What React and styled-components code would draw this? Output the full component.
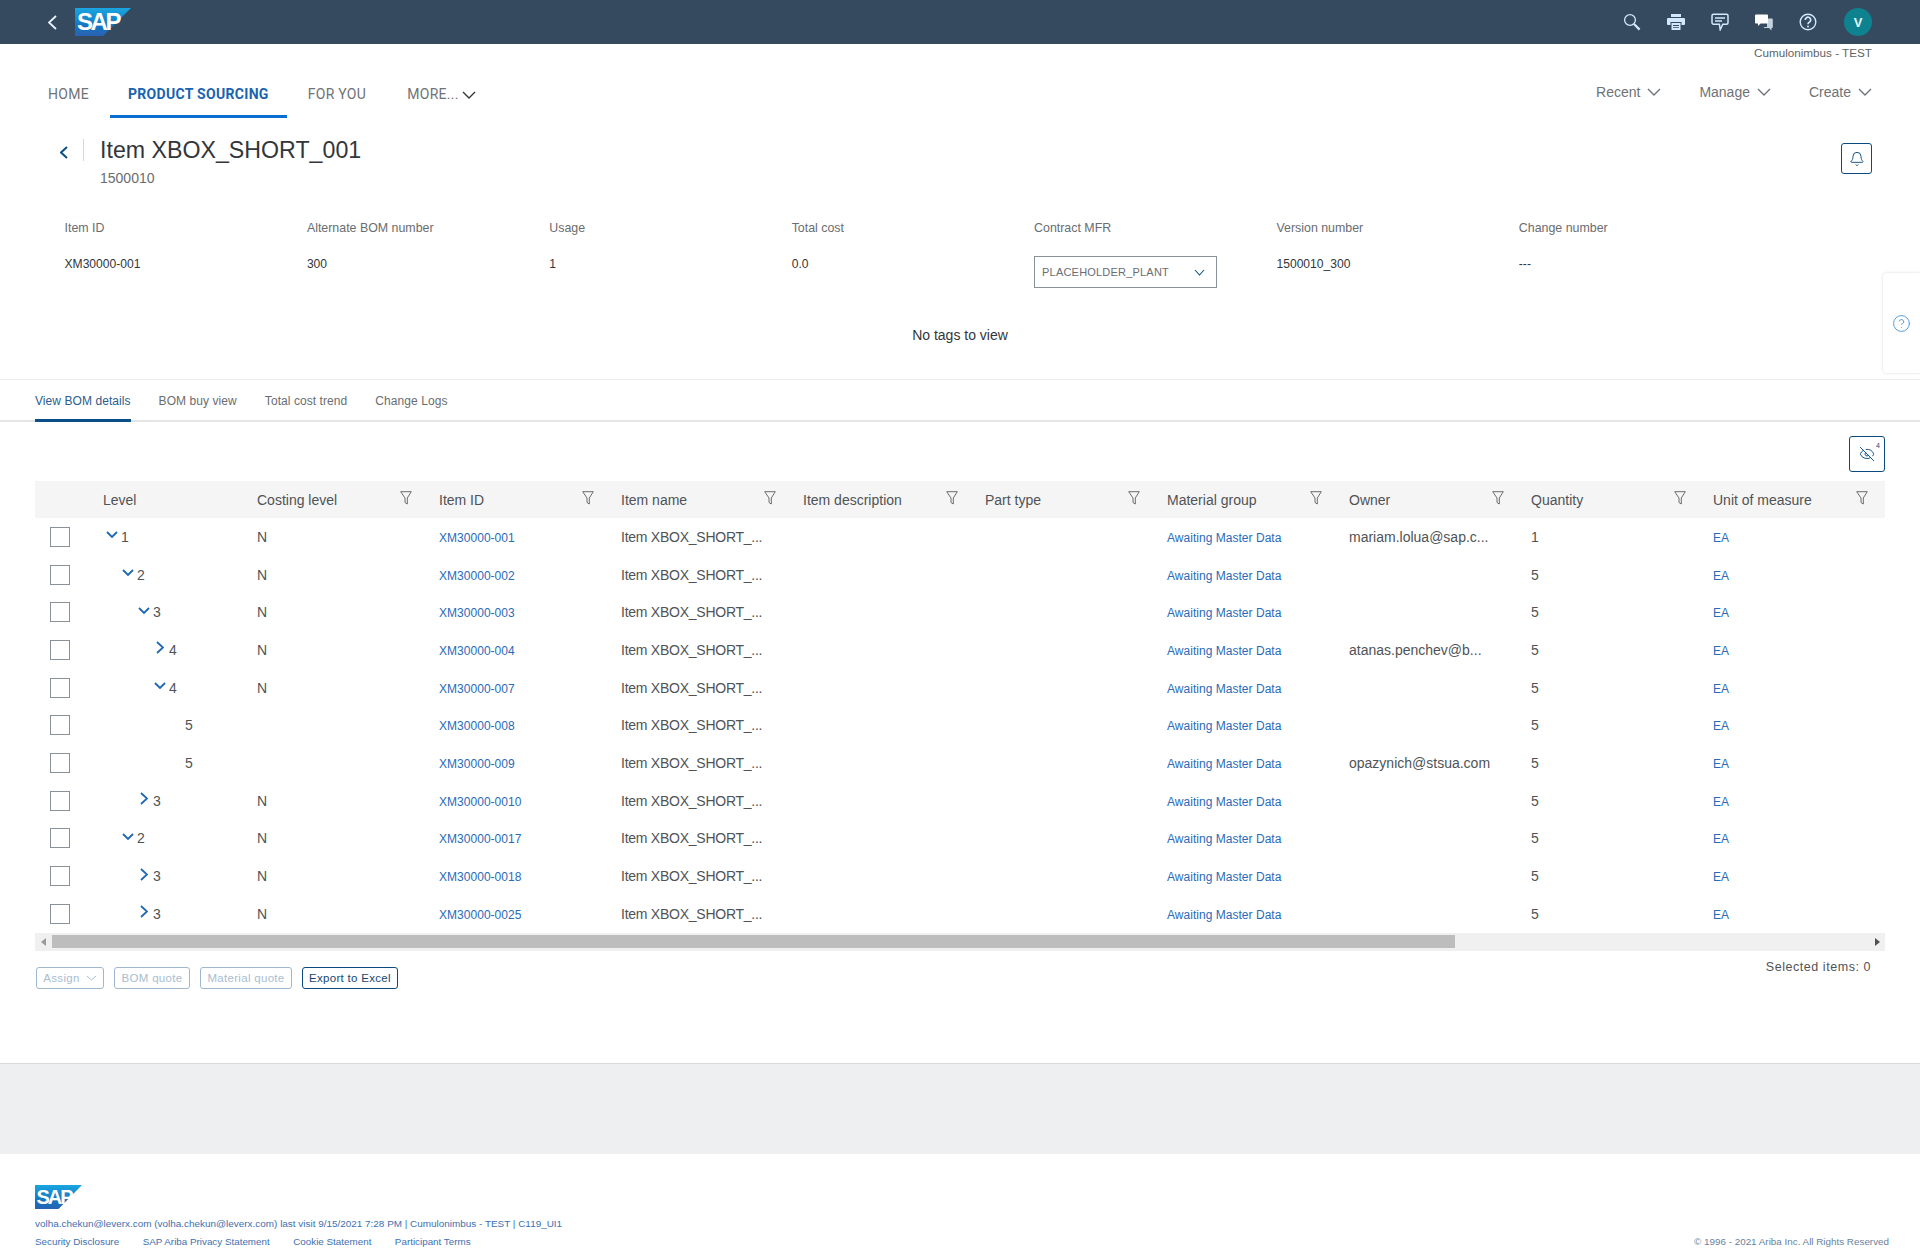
import React from "react";
import styled, { createGlobalStyle } from "styled-components";
import { Bell, EyeOff, HelpCircle } from "lucide-react";

const Global = createGlobalStyle`
  html, body { margin: 0; padding: 0; background: #fff; }
  body { font-family: "Liberation Sans", Arial, sans-serif; color: #32363a; }
  * { box-sizing: border-box; }
`;

const Page = styled.div`width: 1920px; height: 1252px; overflow: hidden; position: relative;`;

const TopBar = styled.header`
  height: 44px; background: #354a5f; display: flex; align-items: center;
  padding: 0 48px; justify-content: space-between;
`;
const TopLeft = styled.div`display: flex; align-items: center; gap: 18px;`;
const TopRight = styled.div`display: flex; align-items: center;`;
const TopIcon = styled.span`display: flex; width: 44px; justify-content: center; color: #d1e8ff;`;
const Avatar = styled.span`
  width: 28px; height: 28px; border-radius: 50%; background: #0f828f; color: #e6f6f8;
  font-size: 13px; font-weight: 700; display: flex; align-items: center; justify-content: center;
  margin-left: 14px;
`;

const LogoBox = styled.span`position: relative; display: block; width: ${p => p.$w}px; height: ${p => p.$h}px;`;
const LogoText = styled.span`
  position: absolute; left: ${p => p.$l}px; top: ${p => p.$t}px; color: #fff; font-weight: 700;
  font-size: ${p => p.$s}px; line-height: 1; letter-spacing: ${p => p.$ls}px;
  font-family: "Liberation Sans", sans-serif;
`;
const Logo = ({ w, h, s, l, t, ls }) => (
  <LogoBox $w={w} $h={h}>
    <svg width={w} height={h} viewBox="0 0 56 28" preserveAspectRatio="none">
      <defs>
        <linearGradient id={`g${w}`} x1="0" y1="0" x2="0" y2="1">
          <stop offset="0" stopColor="#19a6e0" />
          <stop offset="0.65" stopColor="#1474c0" />
          <stop offset="1" stopColor="#2a62b0" />
        </linearGradient>
      </defs>
      <polygon points="0,0 56,0 28,28 0,28" fill={`url(#g${w})`} />
    </svg>
    <LogoText $s={s} $l={l} $t={t} $ls={ls}>SAP</LogoText>
  </LogoBox>
);

const Tenant = styled.div`
  height: 18px; padding-right: 48px; text-align: right; font-size: 11.7px; line-height: 18px; color: #5f6468;
`;

const NavBar = styled.nav`
  height: 56px; padding: 0 48px; display: flex; justify-content: space-between;
`;
const NavLeft = styled.div`display: flex;`;
const NavItem = styled.a`
  display: flex; align-items: flex-start; gap: 3px;
  height: 56px; padding: 23px ${p => p.$px}px 0; margin-right: ${p => p.$mr || 0}px;
  font-family: Roboto, sans-serif; font-size: 14px; line-height: 18px; letter-spacing: .3px;
  color: ${p => (p.$active ? "#1a63b0" : "#6f7276")};
  font-weight: ${p => (p.$active ? 700 : 400)};
  border-bottom: 3px solid ${p => (p.$active ? "#0a6ed1" : "transparent")};
`;
const NavRight = styled.div`display: flex; gap: 38px; padding-top: 21px;`;
const MenuItem = styled.a`
  display: flex; align-items: flex-start; gap: 7px;
  font-size: 14px; line-height: 18px; color: #6f7276;
`;
const ChevSlot = styled.span`display: flex; padding-top: ${p => p.$t}px;`;

const Chevron = ({ dir = "down", w = 14, h = 8, color = "#6f7276", sw = 1.4 }) => {
  const pts = dir === "down" ? `1,1 ${w / 2},${h - 1} ${w - 1},1`
    : dir === "right" ? `1,1 ${w - 1},${h / 2} 1,${h - 1}`
    : `${w - 1},1 1,${h / 2} ${w - 1},${h - 1}`;
  return (
    <svg width={w} height={h} viewBox={`0 0 ${w} ${h}`} fill="none">
      <polyline points={pts} stroke={color} strokeWidth={sw} />
    </svg>
  );
};

const PageHead = styled.section`
  height: 66px; padding: 21px 48px 0 60px; display: flex; align-items: flex-start;
`;
const BackSlot = styled.span`display: flex; padding-top: 7px; width: 24px; height: 22px; border-right: 1px solid #d5d8da; margin-right: 16px;`;
const TitleBlock = styled.div`flex: 1;`;
const Title = styled.h1`margin: 0; font-weight: 400; font-size: 23.2px; line-height: 22px; color: #32363a;`;
const SubTitle = styled.div`font-size: 14px; line-height: 16px; color: #6a6d70; margin-top: 9px;`;
const IconBtn = styled.button`
  width: ${p => p.$w}px; height: ${p => p.$h}px; border: 1px solid #0a4a7f; border-radius: 3px; background: #fff;
  padding: 0; display: flex; align-items: center; justify-content: center; color: #0a4a7f; flex: none;
`;
const BellBtn = styled(IconBtn)`margin-top: 4px;`;

const Fields = styled.section`
  display: grid; grid-template-columns: repeat(7, 242.4px); padding: 37px 0 0 64.5px; height: 130px;
`;
const Field = styled.div`display: flex; flex-direction: column; gap: 22px; align-items: flex-start;`;
const FieldLabel = styled.div`font-size: 12.4px; line-height: 14px; color: #6a6d70;`;
const FieldValue = styled.div`font-size: 12.1px; line-height: 14px; color: #32363a;`;
const SelectBox = styled.div`
  width: 183px; height: 32px; margin-top: -1px; border: 1px solid #89919a; padding: 0 11px 0 7px;
  display: flex; align-items: center; justify-content: space-between;
  font-size: 11px; color: #6a6d70; letter-spacing: 0.2px;
`;
const Tags = styled.div`
  height: 65px; padding-top: 12px; text-align: center; font-size: 14px; line-height: 18px; color: #32363a;
`;

const SideTab = styled.aside`
  position: absolute; left: 1883px; top: 273px; width: 37px; height: 100px; background: #fff;
  border-radius: 4px 0 0 4px; box-shadow: 0 0 3px rgba(0,0,0,.16);
  display: flex; align-items: center; justify-content: center; color: #3f8fd2;
`;

const Tabs = styled.nav`
  height: 43px; border-top: 1px solid #ececec; border-bottom: 2px solid #e3e5e6; padding-left: 35px;
  display: flex; gap: 28px;
`;
const Tab = styled.a`
  height: 42px; padding-top: 14px; font-size: 12px; line-height: 14px; letter-spacing: .07px;
  color: ${p => (p.$active ? "#2b5d8d" : "#6a6d70")};
  border-bottom: ${p => (p.$active ? "3px solid #0a4f8a" : "none")};
`;

const Toolbar = styled.div`height: 59px; padding: 14px 35px 0 0; display: flex; justify-content: flex-end;`;
const EyeWrap = styled.span`position: relative; display: flex;`;
const Sup = styled.sup`position: absolute; right: -5px; top: -4px; font-size: 7px; line-height: 8px; color: #0a4a7f;`;

const TableWrap = styled.section`margin: 0 35px; width: 1850px;`;
const cols = "68px 154px repeat(8, 182px) 172px";
const HeadRow = styled.div`
  display: grid; grid-template-columns: ${cols}; height: 37px; background: #f5f5f5; align-items: center;
`;
const HeadCell = styled.div`
  display: flex; justify-content: space-between; align-items: center; padding-right: 27px;
  font-size: 14px; color: #4f5356; line-height: 18px;
  &:last-child { padding-right: 17px; }
  svg { margin-top: -4px; }
`;
const Row = styled.div`
  display: grid; grid-template-columns: ${cols}; height: 37.7px; align-items: center;
`;
const CheckCell = styled.div`padding-left: 15px; display: flex;`;
const Check = styled.span`display: block; width: 20px; height: 20px; border: 1px solid #89919a; background: #fff;`;
const LevelCell = styled.div`
  display: flex; align-items: center; font-size: 14px; color: #4f5356;
  padding-left: ${p => p.$indent}px;
`;
const TreeSlot = styled.span`display: flex; width: 15px; justify-content: ${p => p.$right ? "flex-end" : "flex-start"}; padding-right: ${p => p.$right ? 5 : 0}px; margin-top: -4px;`;
const Cell = styled.div`
  font-size: 14px; color: #4f5356; white-space: nowrap; overflow: hidden;
`;
const NameCell = styled(Cell)`letter-spacing: -.25px;`;
const LinkCell = styled.a`font-size: 12px; letter-spacing: .03px; color: #2a6ab8; white-space: nowrap; padding-top: 2px;`;

const ScrollTrack = styled.div`
  height: 18px; background: #f0f0f0; display: flex; align-items: center; position: relative;
`;
const ScrollBtn = styled.span`width: 17px; display: flex; justify-content: center;`;
const Thumb = styled.div`width: 1403px; height: 13px; background: #bdbdbd; margin-right: auto;`;

const ActionBar = styled.div`
  margin-top: 16px; padding: 0 49px 0 36px; display: flex; justify-content: space-between; height: 96px;
`;
const ActionLeft = styled.div`display: flex; gap: 10px; align-items: flex-start;`;
const ActionBtn = styled.button`
  height: 22px; padding: 0; border-radius: 3px; background: #fff; font-size: 11.5px; line-height: 20px;
  font-family: "Liberation Sans", sans-serif; letter-spacing: .3px; white-space: nowrap;
  display: flex; align-items: center; gap: 6px;
  width: ${p => p.$w}px; justify-content: center;
  border: 1px solid ${p => (p.$on ? "#0a4a7f" : "#9fb8cf")};
  color: ${p => (p.$on ? "#14476f" : "#a8bdd0")};
`;
const Selected = styled.div`font-size: 12.5px; line-height: 16px; letter-spacing: .55px; color: #4f5356; margin-top: -8px;`;

const Band = styled.div`height: 91px; background: #edeff0; border-top: 1px solid #d9d9d9;`;

const Footer = styled.footer`height: 98px; padding: 31px 31px 0 35px; font-size: 10px; color: #3e6fb0;`;
const FootLine = styled.div`margin-top: 9px; height: 12px; line-height: 12px; font-size: 9.93px;`;
const FootBottom = styled.div`display: flex; justify-content: space-between; margin-top: 6px; line-height: 12px;`;
const FootLinks = styled.div`display: flex; gap: 23.5px; font-size: 9.83px;`;
const Copy = styled.span`color: #6a7f9a; font-size: 9.85px;`;

const SearchIcon = () => (
  <svg width="18" height="18" viewBox="0 0 18 18" fill="none" stroke="#d1e8ff">
    <circle cx="7" cy="7" r="5.4" strokeWidth="1.3" />
    <path d="M11 11l5.6 5.6" strokeWidth="2.2" />
  </svg>
);
const PrintIcon = () => (
  <svg width="18" height="18" viewBox="0 0 18 18" fill="#d1e8ff">
    <path d="M4 1h10v3H4zM5 2v1.5" />
    <path d="M1 5h16a1 1 0 011 1v5a1 1 0 01-1 1h-2.5V9h-11v3H1a1 1 0 01-1-1V6a1 1 0 011-1z" />
    <path d="M4.5 10h9v7h-9zM6 12v.9h6V12zm0 2.2v.9h6v-.9z" fillRule="evenodd" />
  </svg>
);
const FeedbackIcon = () => (
  <svg width="18" height="18" viewBox="0 0 18 18" fill="none" stroke="#d1e8ff" strokeWidth="1.5">
    <path d="M2.5 1.2h13a1.5 1.5 0 011.5 1.5v7a1.5 1.5 0 01-1.5 1.5h-3.7l-2.6 5.5-.8-5.5H2.5A1.5 1.5 0 011 9.700v-7a1.500 1.500 0 011.500-1.500z" />
    <path d="M4 5h10M4 8h7" strokeWidth="1.4" />
  </svg>
);
const ChatIcon = () => (
  <svg width="18" height="18" viewBox="0 0 18 18">
    <path d="M12 5.500h4.800a1 1 0 011 1v7.500a1 1 0 01-1 1h-.3v2.500l-2.500-2.500H9.500l-1-1h3.500z" fill="#c5d3e0" />
    <path d="M1 1.500h11a1 1 0 011 1v7a1 1 0 01-1 1H5.500L3 13v-2.500H1a1 1 0 01-1-1v-7a1 1 0 011-1z" fill="#fff" />
  </svg>
);
const HelpIcon = () => (
  <svg width="18" height="18" viewBox="0 0 18 18" fill="none" stroke="#d1e8ff">
    <circle cx="9" cy="9" r="7.8" strokeWidth="1.4" />
    <path d="M6.300 7a2.700 2.700 0 115 1.300c-.8 1-2.300 1.200-2.300 2.900" strokeWidth="1.700" />
    <circle cx="9" cy="13.400" r="1" fill="#d1e8ff" stroke="none" />
  </svg>
);
const FilterIcon = () => (
  <svg width="12" height="14" viewBox="0 0 12 14" fill="none" stroke="#6a6d70" strokeWidth="1">
    <path d="M.7.700h10.600L7.300 7v6L5 11.500V7z" />
  </svg>
);
const SmallArrow = ({ left }) => (
  <svg width="6" height="8" viewBox="0 0 6 8" fill={left ? "#9a9a9a" : "#505050"}>
    <path d={left ? "M5 0v8L0 4z" : "M1 0v8l5-4z"} />
  </svg>
);

const headers = ["Costing level", "Item ID", "Item name", "Item description", "Part type", "Material group", "Owner", "Quantity", "Unit of measure"];
const rows = [
  { l: 1, t: "d", n: "N", id: "XM30000-001", o: "mariam.lolua@sap.c...", q: 1 },
  { l: 2, t: "d", n: "N", id: "XM30000-002", o: "", q: 5 },
  { l: 3, t: "d", n: "N", id: "XM30000-003", o: "", q: 5 },
  { l: 4, t: "r", n: "N", id: "XM30000-004", o: "atanas.penchev@b...", q: 5 },
  { l: 4, t: "d", n: "N", id: "XM30000-007", o: "", q: 5 },
  { l: 5, t: "", n: "", id: "XM30000-008", o: "", q: 5 },
  { l: 5, t: "", n: "", id: "XM30000-009", o: "opazynich@stsua.com", q: 5 },
  { l: 3, t: "r", n: "N", id: "XM30000-0010", o: "", q: 5 },
  { l: 2, t: "d", n: "N", id: "XM30000-0017", o: "", q: 5 },
  { l: 3, t: "r", n: "N", id: "XM30000-0018", o: "", q: 5 },
  { l: 3, t: "r", n: "N", id: "XM30000-0025", o: "", q: 5 },
];
const fields = [
  ["Item ID", "XM30000-001"], ["Alternate BOM number", "300"], ["Usage", "1"], ["Total cost", "0.0"],
  ["Contract MFR", null], ["Version number", "1500010_300"], ["Change number", "---"],
];

export default function App() {
  return (
    <Page>
      <Global />
      <TopBar>
        <TopLeft>
          <Chevron dir="left" w={9} h={15} color="#eaf4ff" sw={1.8} />
          <Logo w={56} h={28} s={24} l={2} t={2} ls={-2.4} />
        </TopLeft>
        <TopRight>
          <TopIcon><SearchIcon /></TopIcon>
          <TopIcon><PrintIcon /></TopIcon>
          <TopIcon><FeedbackIcon /></TopIcon>
          <TopIcon><ChatIcon /></TopIcon>
          <TopIcon><HelpIcon /></TopIcon>
          <Avatar>V</Avatar>
        </TopRight>
      </TopBar>
      <Tenant>Cumulonimbus - TEST</Tenant>
      <NavBar>
        <NavLeft>
          <NavItem $px={0} $mr={21}>HOME</NavItem>
          <NavItem $px={18} $active $mr={3}>PRODUCT SOURCING</NavItem>
          <NavItem $px={18}>FOR YOU</NavItem>
          <NavItem $px={23}>MORE...<ChevSlot $t={6}><Chevron w={14} h={8} color="#32363a" /></ChevSlot></NavItem>
        </NavLeft>
        <NavRight>
          <MenuItem>Recent<ChevSlot $t={5}><Chevron /></ChevSlot></MenuItem>
          <MenuItem>Manage<ChevSlot $t={5}><Chevron /></ChevSlot></MenuItem>
          <MenuItem>Create<ChevSlot $t={5}><Chevron /></ChevSlot></MenuItem>
        </NavRight>
      </NavBar>
      <PageHead>
        <BackSlot><Chevron dir="left" w={8} h={13} color="#0a4f8a" sw={2} /></BackSlot>
        <TitleBlock>
          <Title>Item XBOX_SHORT_001</Title>
          <SubTitle>1500010</SubTitle>
        </TitleBlock>
        <BellBtn $w={31} $h={31}><Bell size={16} strokeWidth={1.4} /></BellBtn>
      </PageHead>
      <Fields>
        {fields.map(([k, v]) => (
          <Field key={k}>
            <FieldLabel>{k}</FieldLabel>
            {v === null ? (
              <SelectBox>PLACEHOLDER_PLANT<Chevron w={11} h={7} color="#0a4f8a" sw={1.1} /></SelectBox>
            ) : <FieldValue>{v}</FieldValue>}
          </Field>
        ))}
      </Fields>
      <Tags>No tags to view</Tags>
      <SideTab><HelpCircle size={19} strokeWidth={1.1} /></SideTab>
      <Tabs>
        <Tab $active>View BOM details</Tab>
        <Tab>BOM buy view</Tab>
        <Tab>Total cost trend</Tab>
        <Tab>Change Logs</Tab>
      </Tabs>
      <Toolbar>
        <IconBtn $w={36} $h={36}>
          <EyeWrap><EyeOff size={16} strokeWidth={1.4} /><Sup>4</Sup></EyeWrap>
        </IconBtn>
      </Toolbar>
      <TableWrap>
        <HeadRow>
          <div />
          <HeadCell>Level</HeadCell>
          {headers.map(h => <HeadCell key={h}>{h}<FilterIcon /></HeadCell>)}
        </HeadRow>
        {rows.map((r, i) => (
          <Row key={i}>
            <CheckCell><Check /></CheckCell>
            <LevelCell $indent={(r.l - 1) * 16 + 3}>
              <TreeSlot $right={r.t === "r"}>
                {r.t === "d" && <Chevron w={12} h={7} color="#1e67b5" sw={1.8} />}
                {r.t === "r" && <Chevron dir="right" w={8} h={13} color="#1e67b5" sw={1.8} />}
              </TreeSlot>
              {r.l}
            </LevelCell>
            <Cell>{r.n}</Cell>
            <LinkCell>{r.id}</LinkCell>
            <NameCell>Item XBOX_SHORT_...</NameCell>
            <Cell />
            <Cell />
            <LinkCell>Awaiting Master Data</LinkCell>
            <Cell>{r.o}</Cell>
            <Cell>{r.q}</Cell>
            <LinkCell>EA</LinkCell>
          </Row>
        ))}
        <ScrollTrack>
          <ScrollBtn><SmallArrow left /></ScrollBtn>
          <Thumb />
          <ScrollBtn><SmallArrow /></ScrollBtn>
        </ScrollTrack>
      </TableWrap>
      <ActionBar>
        <ActionLeft>
          <ActionBtn $w={68}>Assign<Chevron w={11} h={6} color="#a8bdd0" sw={1} /></ActionBtn>
          <ActionBtn $w={76}>BOM quote</ActionBtn>
          <ActionBtn $w={92}>Material quote</ActionBtn>
          <ActionBtn $w={96} $on>Export to Excel</ActionBtn>
        </ActionLeft>
        <Selected>Selected items: 0</Selected>
      </ActionBar>
      <Band />
      <Footer>
        <Logo w={47} h={24} s={20} l={1.5} t={2} ls={-2} />
        <FootLine>volha.chekun@leverx.com (volha.chekun@leverx.com) last visit 9/15/2021 7:28 PM | Cumulonimbus - TEST | C119_UI1</FootLine>
        <FootBottom>
          <FootLinks>
            <span>Security Disclosure</span>
            <span>SAP Ariba Privacy Statement</span>
            <span>Cookie Statement</span>
            <span>Participant Terms</span>
          </FootLinks>
          <Copy>© 1996 - 2021 Ariba Inc. All Rights Reserved</Copy>
        </FootBottom>
      </Footer>
    </Page>
  );
}
